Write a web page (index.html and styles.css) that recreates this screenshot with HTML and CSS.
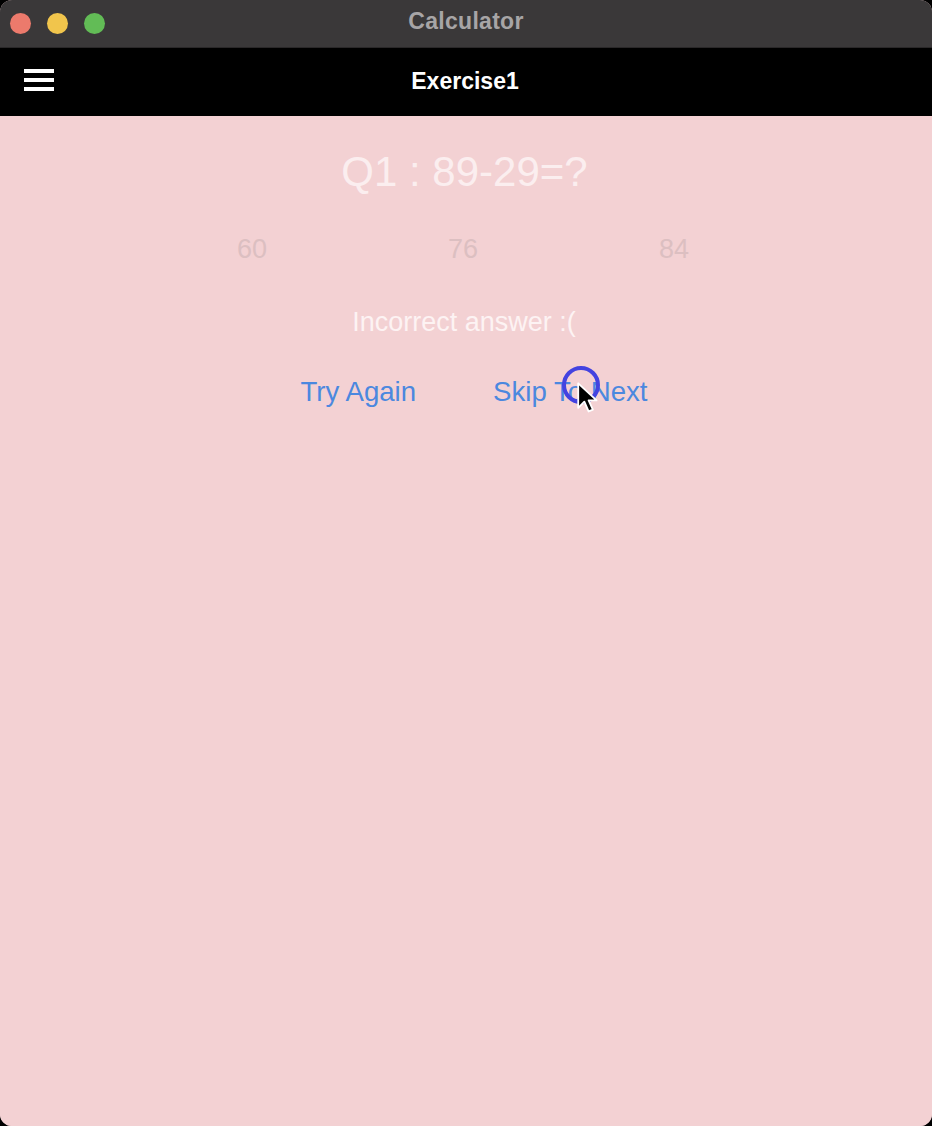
FILE: index.html
```html
<!DOCTYPE html>
<html>
<head>
<meta charset="utf-8">
<link rel="stylesheet" href="styles.css">
</head>
<body>
<div class="window">
  <div class="titlebar">
    <div class="lights">
      <span class="light red"></span>
      <span class="light yellow"></span>
      <span class="light green"></span>
    </div>
    <div class="wtitle">Calculator</div>
  </div>
  <div class="navbar">
    <svg class="menu" width="30" height="22" viewBox="0 0 30 22">
      <rect x="0" y="0" width="30" height="4" fill="#fff"/>
      <rect x="0" y="9" width="30" height="4" fill="#fff"/>
      <rect x="0" y="18" width="30" height="4" fill="#fff"/>
    </svg>
    <div class="ntitle">Exercise1</div>
  </div>
  <div class="content">
    <div class="question">Q1 : 89-29=?</div>
    <div class="options">
      <span class="opt">60</span>
      <span class="opt">76</span>
      <span class="opt">84</span>
    </div>
    <div class="feedback">Incorrect answer :(</div>
    <div class="actions">
      <span class="btn">Try Again</span>
      <span class="btn">Skip To Next</span>
    </div>
    <div class="clickring"></div>
    <svg class="cursor" width="22" height="32" viewBox="0 0 18 26">
      <path d="M1 1 L1 21 L6 16 L9.5 24 L13 22.5 L9.5 15 L16 15 Z" fill="#000" stroke="#fff" stroke-width="1.5" stroke-linejoin="round"/>
    </svg>
  </div>
</div>
</body>
</html>
```

FILE: styles.css
```css
html, body {
  margin: 0;
  padding: 0;
  background: #000;
}
body {
  width: 932px;
  height: 1126px;
  overflow: hidden;
  font-family: "Liberation Sans", Arial, sans-serif;
}
.window {
  width: 932px;
  height: 1126px;
  border-radius: 12px;
  overflow: hidden;
  display: flex;
  flex-direction: column;
  background: #f3d1d3;
}
.titlebar {
  height: 47px;
  background: #3a3839;
  display: flex;
  align-items: center;
  position: relative;
  border-bottom: 1px solid #2a2829;
}
.lights {
  display: flex;
  gap: 16px;
  padding-left: 10px;
}
.light {
  width: 21px;
  height: 21px;
  border-radius: 50%;
  display: block;
}
.red { background: #ec7a6c; }
.yellow { background: #f1c54c; }
.green { background: #62bc56; }
.wtitle {
  position: absolute;
  left: 0;
  right: 0;
  text-align: center;
  color: #a7a5a6;
  font-weight: bold;
  font-size: 23px;
  letter-spacing: 0.3px;
  top: 8px;
}
.navbar {
  height: 68px;
  background: #000;
  display: flex;
  align-items: center;
  position: relative;
}
.menu {
  margin-left: 24px;
  margin-top: -4px;
}
.ntitle {
  position: absolute;
  left: 0;
  right: 0;
  text-align: center;
  color: #fff;
  font-weight: bold;
  font-size: 23px;
  top: 20px;
  padding-right: 2px;
}
.content {
  flex: 1;
  position: relative;
  background: #f3d1d3;
  display: flex;
  flex-direction: column;
  align-items: center;
}
.question {
  margin-top: 33px;
  font-size: 42px;
  color: #fbeeef;
  line-height: 46px;
  padding-right: 3px;
}
.options {
  display: flex;
  justify-content: center;
  margin-top: 39px;
  padding-right: 6px;
}
.opt {
  width: 211px;
  text-align: center;
  font-size: 27px;
  line-height: 30px;
  color: #dcbfc1;
}
.feedback {
  margin-top: 43px;
  font-size: 27px;
  line-height: 30px;
  color: #fdf3f3;
  padding-right: 4px;
}
.actions {
  display: flex;
  gap: 77px;
  margin-top: 38px;
  padding-left: 16px;
}
.btn {
  font-size: 27.6px;
  line-height: 34px;
  color: #4b88df;
}
.clickring {
  position: absolute;
  left: 562px;
  top: 250px;
  width: 38px;
  height: 38px;
  border: 4px solid #4343e0;
  border-radius: 50%;
  box-sizing: border-box;
}
.cursor {
  position: absolute;
  left: 577px;
  top: 266px;
}
```
